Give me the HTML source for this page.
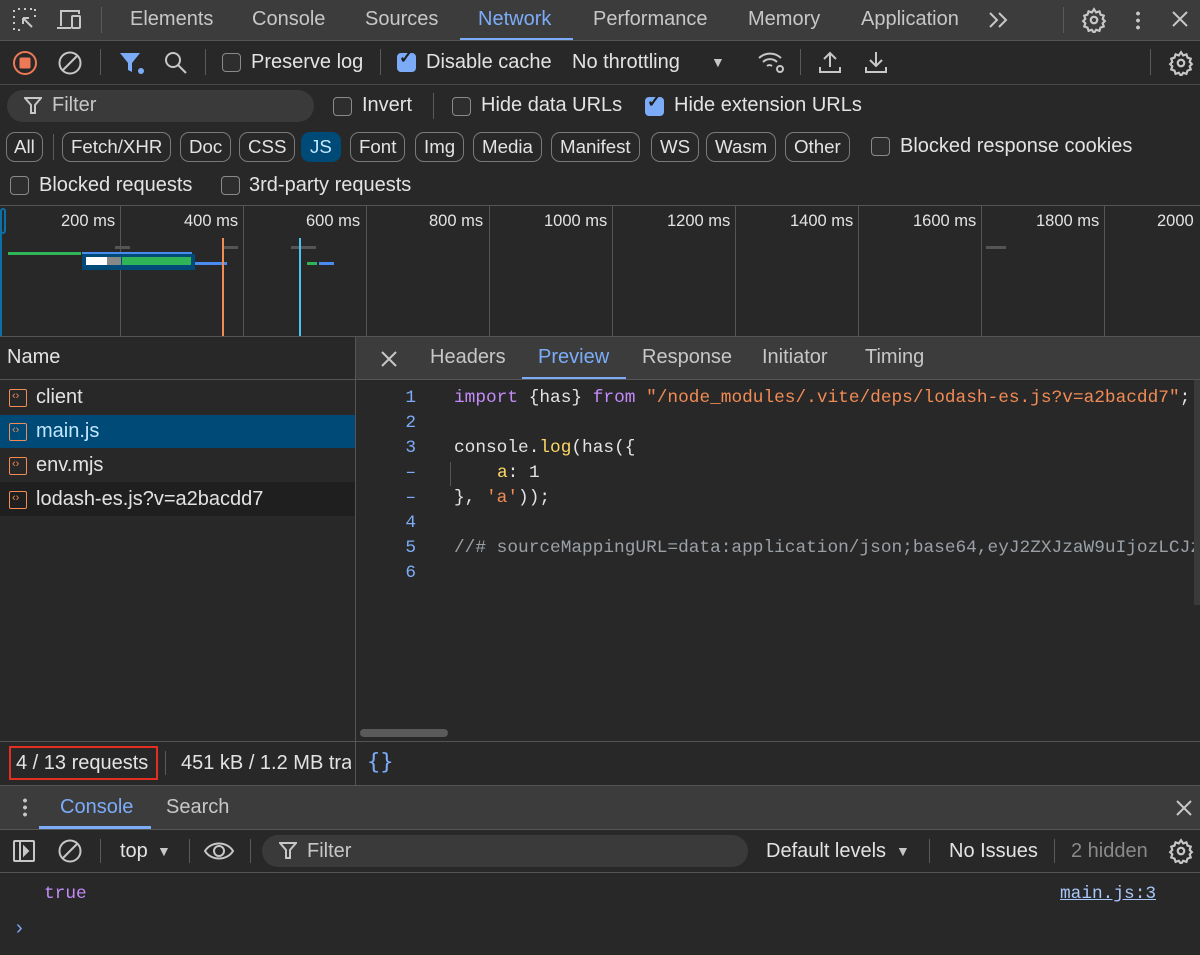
<!DOCTYPE html>
<html><head><meta charset="utf-8"><style>
*{box-sizing:border-box;margin:0;padding:0}
body{width:1200px;height:955px;background:#282828;font-family:"Liberation Sans",sans-serif;color:#e3e3e3;position:relative;overflow:hidden;font-size:20px}
.a{position:absolute;white-space:nowrap}
.hl{position:absolute;left:0;width:1200px;height:1px;background:#4a4a4a}
.vs{position:absolute;width:1px;background:#5a5a5a}
.cb{position:absolute;width:19px;height:19px;border:1.5px solid #8a8a8a;border-radius:4px;background:#2e2e2e}
.cb.on{background:#7cacf8;border-color:#7cacf8}
.chip{position:absolute;top:132px;height:30px;border:1.5px solid #7a7a7a;border-radius:9px;font-size:18.7px;line-height:27px;padding:0 8px;color:#e3e3e3}
.mono{font-family:"Liberation Mono","DejaVu Sans Mono",monospace;font-size:17.8px}
.ln{position:absolute;left:380px;width:36px;text-align:right;color:#7cacf8}
.fi{position:absolute;left:9px;width:18px;height:18px;border:1.5px solid #f28b54;border-radius:2px}
.fi:after{content:"‹›";position:absolute;left:2px;top:-1px;font-size:11px;color:#f28b54;line-height:14px}
</style></head><body>
<div class="a" style="left:0;top:0;width:1200px;height:40px;background:#3c3c3c"></div>
<svg class="a" style="top:7px;left:12px" width="26" height="26" viewBox="0 0 26 26" fill="none" stroke="#c7c7c7" stroke-width="2"><path d="M2 3v2M2 9v2M2 15v2M2 21v2M6 2h2M12 2h2M18 2h2M23 2v2M23 8v2M6 23h2" /><path d="M11 11l9 9M11 11h6M11 11v6"/></svg>
<svg class="a" style="left:56px;top:8px" width="28" height="24" viewBox="0 0 28 24" fill="none" stroke="#c7c7c7" stroke-width="2"><path d="M5 18V3h18v3"/><path d="M1 20h14"/><rect x="16" y="8" width="8" height="12" rx="1"/></svg>
<div class="vs" style="left:101px;top:7px;height:26px"></div>
<span class="a" style="left:130px;top:8px;color:#c7c7c7">Elements</span>
<span class="a" style="left:252px;top:8px;color:#c7c7c7">Console</span>
<span class="a" style="left:365px;top:8px;color:#c7c7c7">Sources</span>
<span class="a" style="left:478px;top:8px;color:#7cacf8">Network</span>
<div class="a" style="left:460px;top:38px;width:113px;height:3px;background:#7cacf8"></div>
<span class="a" style="left:593px;top:8px;color:#c7c7c7">Performance</span>
<span class="a" style="left:748px;top:8px;color:#c7c7c7">Memory</span>
<span class="a" style="left:861px;top:8px;color:#c7c7c7">Application</span>
<svg class="a" style="left:988px;top:11px" width="22" height="18" fill="none" stroke="#c7c7c7" stroke-width="2"><path d="M2 2l7 7-7 7M11 2l7 7-7 7"/></svg>
<div class="vs" style="left:1063px;top:7px;height:26px"></div>
<svg class="a" style="left:1081px;top:7px" width="26" height="26" viewBox="0 0 24 24" fill="none" stroke="#c7c7c7" stroke-width="2"><circle cx="12" cy="12" r="3"/><path d="M12 2l2 3 3-1 1 3 3 1-1 3 2 2-2 2 1 3-3 1-1 3-3-1-2 3-2-3-3 1-1-3-3-1 1-3-2-2 2-2-1-3 3-1 1-3 3 1z"/></svg>
<div class="a" style="left:1136px;top:10px;width:4px;height:20px;background:radial-gradient(circle,#c7c7c7 1.8px,transparent 2px) 0 0/4px 7px repeat-y"></div>
<svg class="a" style="left:1171px;top:10px" width="18" height="18" stroke="#c7c7c7" stroke-width="2"><path d="M2 2l14 14M16 2L2 16"/></svg>
<div class="hl" style="top:40px;background:#555"></div>
<svg class="a" style="left:12px;top:50px" width="26" height="26"><circle cx="13" cy="13" r="11" fill="none" stroke="#ee7956" stroke-width="2"/><rect x="7.5" y="7.5" width="11" height="11" rx="1.5" fill="#ee7956"/></svg>
<svg class="a" style="left:57px;top:50px" width="26" height="26" fill="none" stroke="#c7c7c7" stroke-width="2"><circle cx="13" cy="13" r="10.5"/><path d="M6 20L20 6"/></svg>
<div class="vs" style="left:100px;top:49px;height:26px"></div>
<svg class="a" style="left:118px;top:51px" width="28" height="24"><path d="M2 2h20l-8 10v9l-4-2v-7z" fill="#7cacf8"/><circle cx="23" cy="20" r="3" fill="#7cacf8"/></svg>
<svg class="a" style="left:163px;top:50px" width="26" height="26" fill="none" stroke="#c7c7c7" stroke-width="2"><circle cx="10" cy="10" r="7"/><path d="M15 15l8 8"/></svg>
<div class="vs" style="left:205px;top:49px;height:26px"></div>
<div class="cb" style="left:222px;top:53px"></div>
<span class="a" style="left:251px;top:51px">Preserve log</span>
<div class="vs" style="left:380px;top:49px;height:26px"></div>
<div class="cb on" style="left:397px;top:53px"></div>
<span class="a" style="left:399px;top:48px;color:#1f1f1f;font-size:17px;font-weight:bold">✓</span>
<span class="a" style="left:426px;top:51px">Disable cache</span>
<span class="a" style="left:572px;top:51px">No throttling</span>
<span class="a" style="left:711px;top:54px;font-size:14px;color:#c7c7c7">▼</span>
<svg class="a" style="left:757px;top:49px" width="30" height="26" fill="none" stroke="#c7c7c7" stroke-width="2"><path d="M2 9a16 16 0 0 1 22 0M6 13a10 10 0 0 1 14 0M10 17a4 4 0 0 1 5 0"/><circle cx="23" cy="20" r="3"/></svg>
<div class="vs" style="left:800px;top:49px;height:26px"></div>
<svg class="a" style="left:818px;top:49px" width="24" height="26" fill="none" stroke="#c7c7c7" stroke-width="2"><path d="M12 18V4M6 10l6-6 6 6M2 18v5h20v-5"/></svg>
<svg class="a" style="left:864px;top:49px" width="24" height="26" fill="none" stroke="#c7c7c7" stroke-width="2"><path d="M12 3v14M6 11l6 6 6-6M2 18v5h20v-5"/></svg>
<div class="vs" style="left:1150px;top:49px;height:26px"></div>
<svg class="a" style="left:1168px;top:50px" width="26" height="26" viewBox="0 0 24 24" fill="none" stroke="#c7c7c7" stroke-width="2"><circle cx="12" cy="12" r="3"/><path d="M12 2l2 3 3-1 1 3 3 1-1 3 2 2-2 2 1 3-3 1-1 3-3-1-2 3-2-3-3 1-1-3-3-1 1-3-2-2 2-2-1-3 3-1 1-3 3 1z"/></svg>
<div class="hl" style="top:84px"></div>
<div class="a" style="left:7px;top:90px;width:307px;height:32px;border-radius:16px;background:#3a3a3a"></div>
<svg class="a" style="left:24px;top:97px" width="18" height="18" fill="none" stroke="#c7c7c7" stroke-width="2"><path d="M1 1h16l-6 7v8h-4V8z"/></svg>
<span class="a" style="left:52px;top:94px;color:#c7c7c7">Filter</span>
<div class="cb" style="left:333px;top:97px"></div>
<span class="a" style="left:362px;top:94px">Invert</span>
<div class="vs" style="left:433px;top:93px;height:26px"></div>
<div class="cb" style="left:452px;top:97px"></div>
<span class="a" style="left:481px;top:94px">Hide data URLs</span>
<div class="cb on" style="left:645px;top:97px"></div>
<span class="a" style="left:647px;top:92px;color:#1f1f1f;font-size:17px;font-weight:bold">✓</span>
<span class="a" style="left:674px;top:94px">Hide extension URLs</span>
<div class="chip" style="left:6px;padding:0 7px">All</div>
<div class="vs" style="left:53px;top:134px;height:26px"></div>
<div class="chip" style="left:62px">Fetch/XHR</div>
<div class="chip" style="left:180px">Doc</div>
<div class="chip" style="left:239px">CSS</div>
<div class="chip" style="left:301px;background:#004a77;border-color:#004a77;color:#c2e7ff">JS</div>
<div class="chip" style="left:350px">Font</div>
<div class="chip" style="left:415px">Img</div>
<div class="chip" style="left:473px">Media</div>
<div class="chip" style="left:551px">Manifest</div>
<div class="chip" style="left:651px">WS</div>
<div class="chip" style="left:706px">Wasm</div>
<div class="chip" style="left:785px">Other</div>
<div class="cb" style="left:871px;top:137px"></div>
<span class="a" style="left:900px;top:135px">Blocked response cookies</span>
<div class="cb" style="left:10px;top:176px"></div>
<span class="a" style="left:39px;top:174px">Blocked requests</span>
<div class="cb" style="left:221px;top:176px"></div>
<span class="a" style="left:249px;top:174px">3rd-party requests</span>
<div class="hl" style="top:205px;background:#555"></div>
<div class="vs" style="left:120px;top:206px;height:130px;background:#555"></div>
<div class="vs" style="left:243px;top:206px;height:130px;background:#555"></div>
<div class="vs" style="left:366px;top:206px;height:130px;background:#555"></div>
<div class="vs" style="left:489px;top:206px;height:130px;background:#555"></div>
<div class="vs" style="left:612px;top:206px;height:130px;background:#555"></div>
<div class="vs" style="left:735px;top:206px;height:130px;background:#555"></div>
<div class="vs" style="left:858px;top:206px;height:130px;background:#555"></div>
<div class="vs" style="left:981px;top:206px;height:130px;background:#555"></div>
<div class="vs" style="left:1104px;top:206px;height:130px;background:#555"></div>
<div class="a" style="left:0;top:208px;width:6px;height:26px;border:2px solid #0b6fa8;border-radius:3px"></div>
<div class="a" style="left:0;top:230px;width:2px;height:106px;background:#0b6fa8"></div>
<div style="font-size:16.5px;color:#e3e3e3">
<span class="a" style="left:61px;top:212px">200 ms</span>
<span class="a" style="left:184px;top:212px">400 ms</span>
<span class="a" style="left:306px;top:212px">600 ms</span>
<span class="a" style="left:429px;top:212px">800 ms</span>
<span class="a" style="left:544px;top:212px">1000 ms</span>
<span class="a" style="left:667px;top:212px">1200 ms</span>
<span class="a" style="left:790px;top:212px">1400 ms</span>
<span class="a" style="left:913px;top:212px">1600 ms</span>
<span class="a" style="left:1036px;top:212px">1800 ms</span>
<span class="a" style="left:1157px;top:212px">2000</span>
</div>
<div class="a" style="left:8px;top:252px;width:73px;height:3px;background:#2fb457"></div>
<div class="a" style="left:82px;top:252px;width:110px;height:3px;background:#4a8bf0"></div>
<div class="a" style="left:115px;top:246px;width:15px;height:3px;background:#555"></div>
<div class="a" style="left:223px;top:246px;width:15px;height:3px;background:#555"></div>
<div class="a" style="left:291px;top:246px;width:25px;height:3px;background:#555"></div>
<div class="a" style="left:82px;top:254px;width:113px;height:16px;background:#004a77"></div>
<div class="a" style="left:86px;top:257px;width:21px;height:8px;background:#fff"></div>
<div class="a" style="left:107px;top:257px;width:14px;height:8px;background:#888"></div>
<div class="a" style="left:122px;top:257px;width:69px;height:8px;background:#2fb457"></div>
<div class="a" style="left:195px;top:262px;width:32px;height:3px;background:#4a8bf0"></div>
<div class="a" style="left:307px;top:262px;width:10px;height:3px;background:#2fb457"></div>
<div class="a" style="left:319px;top:262px;width:15px;height:3px;background:#4a8bf0"></div>
<div class="a" style="left:986px;top:246px;width:20px;height:3px;background:#555"></div>
<div class="a" style="left:222px;top:238px;width:2px;height:98px;background:#f28b54"></div>
<div class="a" style="left:299px;top:238px;width:2px;height:98px;background:#4cc4ef"></div>
<div class="hl" style="top:336px;background:#555"></div>
<span class="a" style="left:7px;top:346px">Name</span>
<div class="hl" style="top:379px;background:#555;width:355px"></div>
<div class="a" style="left:0;top:415px;width:355px;height:33px;background:#004a77"></div>
<div class="a" style="left:0;top:482px;width:355px;height:34px;background:#1f1f1f"></div>
<div class="fi" style="top:389px"></div><span class="a" style="left:36px;top:386px">client</span>
<div class="fi" style="top:423px"></div><span class="a" style="left:36px;top:420px;color:#c2e7ff">main.js</span>
<div class="fi" style="top:457px"></div><span class="a" style="left:36px;top:454px">env.mjs</span>
<div class="fi" style="top:491px"></div><span class="a" style="left:36px;top:488px">lodash-es.js?v=a2bacdd7</span>
<div class="vs" style="left:355px;top:337px;height:448px;background:#555"></div>
<div class="a" style="left:356px;top:337px;width:844px;height:43px;background:#3c3c3c"></div>
<svg class="a" style="left:380px;top:350px" width="18" height="18" stroke="#c7c7c7" stroke-width="2"><path d="M2 2l14 14M16 2L2 16"/></svg>
<span class="a" style="left:430px;top:346px;color:#c7c7c7">Headers</span>
<span class="a" style="left:538px;top:346px;color:#7cacf8">Preview</span>
<div class="a" style="left:522px;top:377px;width:104px;height:3px;background:#7cacf8"></div>
<span class="a" style="left:642px;top:346px;color:#c7c7c7">Response</span>
<span class="a" style="left:762px;top:346px;color:#c7c7c7">Initiator</span>
<span class="a" style="left:865px;top:346px;color:#c7c7c7">Timing</span>
<div class="hl" style="top:379px;left:356px;width:844px;background:#555"></div>
<div class="mono">
<span class="ln" style="top:388px">1</span>
<span class="ln" style="top:413px">2</span>
<span class="ln" style="top:438px">3</span>
<span class="ln" style="top:463px">–</span>
<span class="ln" style="top:488px">–</span>
<span class="ln" style="top:513px">4</span>
<span class="ln" style="top:538px">5</span>
<span class="ln" style="top:563px">6</span>
<span class="a" style="left:454px;top:388px"><span style="color:#c58af9">import</span> {has} <span style="color:#c58af9">from</span> <span style="color:#f28b54">"/node_modules/.vite/deps/lodash-es.js?v=a2bacdd7"</span>;</span>
<span class="a" style="left:454px;top:438px">console.<span style="color:#fdd663">log</span>(has({</span>
<div class="a" style="left:450px;top:462px;width:1px;height:24px;background:#555"></div>
<span class="a" style="left:497px;top:463px"><span style="color:#fdd663">a</span>: 1</span>
<span class="a" style="left:454px;top:488px">}, <span style="color:#f28b54">'a'</span>));</span>
<span class="a" style="left:454px;top:538px;color:#9aa0a6;width:740px;overflow:hidden">//# sourceMappingURL=data:application/json;base64,eyJ2ZXJzaW9uIjozLCJzb</span>
</div>
<div class="a" style="left:1194px;top:380px;width:6px;height:225px;background:#3a3a3a"></div>
<div class="a" style="left:360px;top:729px;width:88px;height:8px;border-radius:4px;background:#5a5a5a"></div>
<div class="hl" style="top:741px;background:#555"></div>
<div class="a" style="left:9px;top:746px;width:149px;height:34px;border:2px solid #e22f22"></div>
<span class="a" style="left:16px;top:752px">4 / 13 requests</span>
<div class="vs" style="left:165px;top:751px;height:24px"></div>
<span class="a" style="left:181px;top:752px;width:170px;overflow:hidden">451 kB / 1.2 MB transferred</span>
<span class="a" style="left:367px;top:750px;color:#7cacf8;font-size:22px;font-family:'DejaVu Sans Mono',monospace">{}</span>
<div class="hl" style="top:785px;background:#555"></div>
<div class="a" style="left:0;top:786px;width:1200px;height:43px;background:#3c3c3c"></div>
<div class="a" style="left:23px;top:797px;width:4px;height:20px;background:radial-gradient(circle,#c7c7c7 1.8px,transparent 2px) 0 0/4px 7px repeat-y"></div>
<span class="a" style="left:60px;top:796px;color:#7cacf8">Console</span>
<div class="a" style="left:39px;top:826px;width:112px;height:3px;background:#7cacf8"></div>
<span class="a" style="left:166px;top:796px;color:#c7c7c7">Search</span>
<svg class="a" style="left:1175px;top:799px" width="18" height="18" stroke="#c7c7c7" stroke-width="2"><path d="M2 2l14 14M16 2L2 16"/></svg>
<div class="hl" style="top:829px;background:#555"></div>
<svg class="a" style="left:12px;top:839px" width="24" height="24" fill="none" stroke="#c7c7c7" stroke-width="2"><rect x="2" y="2" width="20" height="20" rx="1"/><path d="M8 2v20"/><path d="M12 8l4 4-4 4z" fill="#c7c7c7"/></svg>
<svg class="a" style="left:57px;top:838px" width="26" height="26" fill="none" stroke="#c7c7c7" stroke-width="2"><circle cx="13" cy="13" r="10.5"/><path d="M6 20L20 6"/></svg>
<div class="vs" style="left:100px;top:839px;height:24px"></div>
<span class="a" style="left:120px;top:840px">top</span>
<span class="a" style="left:157px;top:843px;font-size:14px;color:#c7c7c7">▼</span>
<div class="vs" style="left:189px;top:839px;height:24px"></div>
<svg class="a" style="left:203px;top:838px" width="32" height="26" fill="none" stroke="#c7c7c7" stroke-width="2"><path d="M2 13C8 3 24 3 30 13C24 23 8 23 2 13z"/><circle cx="16" cy="13" r="5"/></svg>
<div class="vs" style="left:250px;top:839px;height:24px"></div>
<div class="a" style="left:262px;top:835px;width:486px;height:32px;border-radius:16px;background:#3a3a3a"></div>
<svg class="a" style="left:279px;top:842px" width="18" height="18" fill="none" stroke="#c7c7c7" stroke-width="2"><path d="M1 1h16l-6 7v8h-4V8z"/></svg>
<span class="a" style="left:307px;top:840px;color:#c7c7c7">Filter</span>
<span class="a" style="left:766px;top:840px">Default levels</span>
<span class="a" style="left:896px;top:843px;font-size:14px;color:#c7c7c7">▼</span>
<div class="vs" style="left:929px;top:839px;height:24px"></div>
<span class="a" style="left:949px;top:840px">No Issues</span>
<div class="vs" style="left:1054px;top:839px;height:24px"></div>
<span class="a" style="left:1071px;top:840px;color:#8a8a8a">2 hidden</span>
<svg class="a" style="left:1168px;top:838px" width="26" height="26" viewBox="0 0 24 24" fill="none" stroke="#c7c7c7" stroke-width="2"><circle cx="12" cy="12" r="3"/><path d="M12 2l2 3 3-1 1 3 3 1-1 3 2 2-2 2 1 3-3 1-1 3-3-1-2 3-2-3-3 1-1-3-3-1 1-3-2-2 2-2-1-3 3-1 1-3 3 1z"/></svg>
<div class="hl" style="top:872px;background:#555"></div>
<span class="a mono" style="left:44px;top:884px;color:#c58af9">true</span>
<span class="a mono" style="left:1060px;top:884px;color:#a8c7fa;text-decoration:underline">main.js:3</span>
<span class="a" style="left:16px;top:917px;color:#7cacf8;font-size:20px">›</span>
</body></html>
